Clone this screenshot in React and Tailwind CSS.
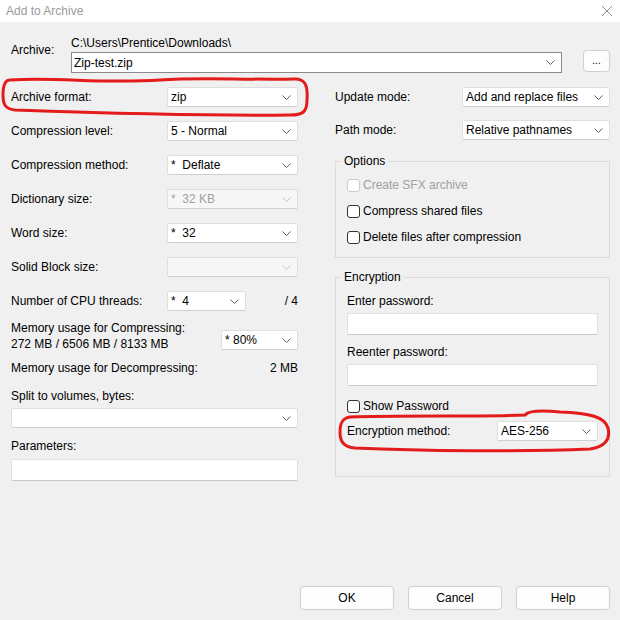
import React from 'react';

const font = { fontFamily: '"Liberation Sans", Arial, sans-serif' };

function Chevron({ disabled }) {
    return (
        <svg width="9" height="5" viewBox="0 0 9 5" className="shrink-0">
            <path d="M0.5 0.5 L4.5 4.5 L8.5 0.5" fill="none" stroke={disabled ? '#c4c4c4' : '#606060'} strokeWidth="1" />
        </svg>
    );
}

function Combo({ value, width, disabled, className = '' }) {
    return (
        <div
            className={`h-[20px] flex items-center justify-between pl-[3px] pr-[6px] rounded-[2px] border border-[#dedede] border-b-[#cfcfcf] ${disabled ? 'bg-[#f7f7f7] text-[#a0a0a0]' : 'bg-white text-black'} ${className}`}
            style={{ width }}
        >
            <span className="whitespace-pre">{value}</span>
            <Chevron disabled={disabled} />
        </div>
    );
}

function Row({ label, children }) {
    return (
        <div className="h-[34px] flex items-center justify-between">
            <span>{label}</span>
            {children}
        </div>
    );
}

function Check({ label, disabled }) {
    return (
        <div className={`h-[26px] flex items-center gap-[3px] ${disabled ? 'text-[#a0a0a0]' : 'text-black'}`}>
            <span className={`w-[13px] h-[13px] rounded-[3px] border bg-white ${disabled ? 'border-[#cccccc]' : 'border-[#333333]'}`} />
            <span>{label}</span>
        </div>
    );
}

function Field() {
    return <div className="h-[22px] bg-white border border-[#e0e0e0] border-b-[#c8c8c8] rounded-[2px]" />;
}

function Button({ children }) {
    return (
        <button className="w-[94px] h-[24px] rounded-[4px] border border-[#d0d0d0] bg-[#fdfdfd] text-black">
            {children}
        </button>
    );
}

export default function App() {
    return (
        <div className="w-[620px] h-[620px] text-[12px] text-black relative overflow-hidden" style={font}>
            {/* title bar */}
            <div className="h-[22px] bg-white flex items-center justify-between pl-[6px] pr-[7px]">
                <span className="text-[#9a9a9a]">Add to Archive</span>
                <svg width="12" height="12" viewBox="0 0 12 12">
                    <path d="M1 1 L11 11 M11 1 L1 11" stroke="#8a8a8a" strokeWidth="1" />
                </svg>
            </div>

            <div className="h-[598px] bg-[#f0f0f0] flex flex-col">
                {/* archive path */}
                <div className="flex pl-[11px] pt-[14px]">
                    <span className="w-[60px] pt-[5px]">Archive:</span>
                    <div className="flex flex-col">
                        <span className="h-[16px] leading-[14px]">C:\Users\Prentice\Downloads\</span>
                        <div className="w-[491px] h-[21px] bg-white border border-[#8a8a8a] flex items-center justify-between pl-[2px] pr-[6px]">
                            <span>Zip-test.zip</span>
                            <Chevron />
                        </div>
                    </div>
                    <div className="ml-[21px] mt-[14px] w-[27px] h-[22px] rounded-[4px] border border-[#d0d0d0] bg-[#fdfdfd] flex items-center justify-center text-[10px] leading-none">
                        ...
                    </div>
                </div>

                <div className="flex pl-[11px] pt-[7px]">
                    {/* left column */}
                    <div className="w-[287px] flex flex-col">
                        <Row label="Archive format:"><Combo value="zip" width={131} /></Row>
                        <Row label="Compression level:"><Combo value="5 - Normal" width={131} /></Row>
                        <Row label="Compression method:"><Combo value="*  Deflate" width={131} /></Row>
                        <Row label="Dictionary size:"><Combo value="*  32 KB" width={131} disabled /></Row>
                        <Row label="Word size:"><Combo value="*  32" width={131} /></Row>
                        <Row label="Solid Block size:"><Combo value="" width={131} disabled /></Row>
                        <div className="h-[34px] flex items-center">
                            <span className="w-[156px]">Number of CPU threads:</span>
                            <Combo value="*  4" width={79} />
                            <span className="ml-auto">/ 4</span>
                        </div>
                        <div className="flex items-center justify-between h-[34px] mt-[1px]">
                            <div className="flex flex-col leading-[16px]">
                                <span>Memory usage for Compressing:</span>
                                <span>272 MB / 6506 MB / 8133 MB</span>
                            </div>
                            <Combo value="* 80%" width={77} className="mt-[8px]" />
                        </div>
                        <div className="h-[16px] mt-[7px] flex items-center justify-between">
                            <span>Memory usage for Decompressing:</span>
                            <span>2 MB</span>
                        </div>
                        <span className="mt-[12px] leading-[16px]">Split to volumes, bytes:</span>
                        <Combo value="" width={287} className="mt-[4px]" />
                        <span className="mt-[10px] leading-[16px]">Parameters:</span>
                        <div className="mt-[5px]"><Field /></div>
                    </div>

                    {/* right column */}
                    <div className="w-[275px] ml-[37px] flex flex-col">
                        <div className="h-[34px] flex items-center justify-between">
                            <span>Update mode:</span>
                            <Combo value="Add and replace files" width={148} />
                        </div>
                        <div className="h-[32px] flex items-center justify-between">
                            <span>Path mode:</span>
                            <Combo value="Relative pathnames" width={148} />
                        </div>

                        <fieldset className="mt-[6px] h-[106px] border border-[#dcdcdc]">
                            <legend className="ml-[5px] px-[3px]">Options</legend>
                            <div className="mt-[2px] pl-[11px]">
                                <Check label="Create SFX archive" disabled />
                                <Check label="Compress shared files" />
                                <Check label="Delete files after compression" />
                            </div>
                        </fieldset>

                        <fieldset className="mt-[10px] h-[209px] border border-[#dcdcdc]">
                            <legend className="ml-[5px] px-[3px]">Encryption</legend>
                            <div className="flex flex-col px-[11px]">
                                <span className="mt-[7px] leading-[16px]">Enter password:</span>
                                <div className="mt-[4px]"><Field /></div>
                                <span className="mt-[9px] leading-[16px]">Reenter password:</span>
                                <div className="mt-[4px]"><Field /></div>
                                <div className="mt-[7px]"><Check label="Show Password" /></div>
                                <div className="h-[24px] flex items-center justify-between">
                                    <span>Encryption method:</span>
                                    <Combo value="AES-256" width={101} />
                                </div>
                            </div>
                        </fieldset>
                    </div>
                </div>

                {/* dialog buttons */}
                <div className="mt-auto mb-[10px] flex justify-end gap-[14px] pr-[10px]">
                    <Button>OK</Button>
                    <Button>Cancel</Button>
                    <Button>Help</Button>
                </div>
            </div>

            {/* hand-drawn red marks */}
            <svg className="absolute inset-0 pointer-events-none" width="620" height="620" viewBox="0 0 620 620">
                <g fill="none" stroke="#e31b1b" strokeWidth="3" strokeLinecap="round">
                    <path d="M10 80 C60 77 100 84 160 80 C200 77 240 80 295 79 C305 79 308 85 307 100 C307 112 303 115 290 115 C200 116 100 113 15 110 C5 109 3 104 3 95 C3 85 5 80 10 80 Z" />
                    <path d="M350 417 C400 415 480 417 525 415 C528 411 540 410 560 412 C590 413 605 417 608 428 C611 440 604 447 590 449 C520 452 420 451 355 448 C343 447 340 441 340 432 C340 422 343 418 350 417 Z" />
                </g>
            </svg>
        </div>
    );
}
